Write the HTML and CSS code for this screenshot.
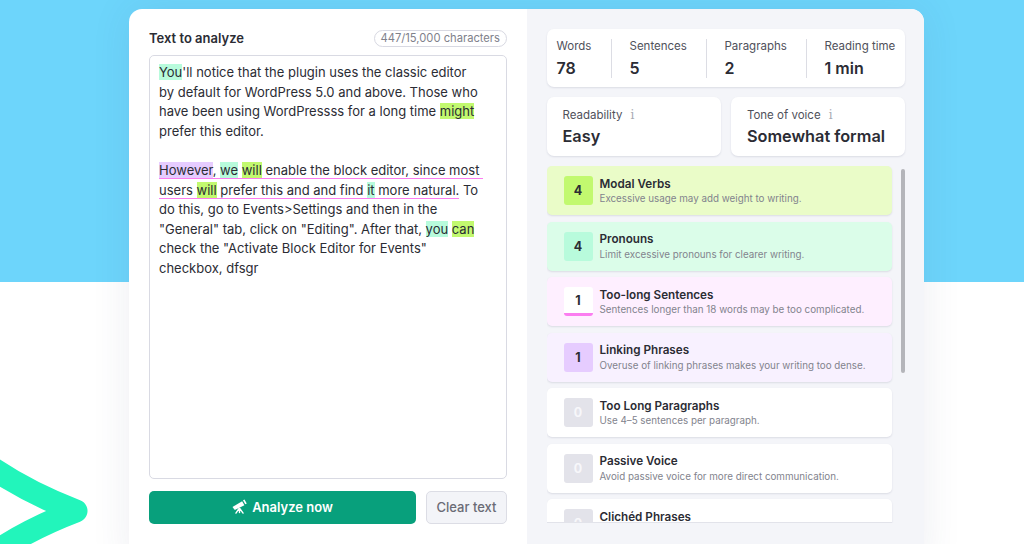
FILE: index.html
```html
<!DOCTYPE html>
<html lang="en">
<head>
<meta charset="utf-8">
<title>Text analyzer</title>
<link rel="stylesheet" href="styles.css">
</head>
<body>
<svg class="logo" width="100" height="100" viewBox="0 0 100 100" aria-hidden="true"><path d="M-14 20Q26 48 76 67Q26 86 -14 114" fill="none" stroke="#22f5bb" stroke-width="23" stroke-linejoin="round"/></svg>
<main class="card">
  <section class="left">
    <div class="head">
      <h2>Text to analyze</h2>
      <span class="count">447/15,000 characters</span>
    </div>
    <div class="editor">
      <p><mark class="mint">You</mark>'ll notice that the plugin uses the classic editor by default for WordPress 5.0 and above. Those who have been using WordPressss for a long time <mark class="lime">might</mark> prefer this editor.</p>
      <p><span class="long"><mark class="lilac">However</mark>, <mark class="mint">we</mark> <mark class="lime">will</mark> enable the block editor, since most users <mark class="lime">will</mark> prefer this and and find <mark class="mint">it</mark> more natural.</span> To do this, go to Events&gt;Settings and then in the "General" tab, click on "Editing". After that, <mark class="mint">you</mark> <mark class="lime">can</mark> check the "Activate Block Editor for Events" checkbox, dfsgr</p>
    </div>
    <div class="actions">
      <button class="primary">
        <svg width="15" height="15" viewBox="0 0 16 16" aria-hidden="true"><g fill="#fff"><path d="M.5 8.4 10.8 2.4l2.4 4.2L3 11.6z"/><path d="M11.7 1.4l1.6-.9 2.4 4.3-1.6.9z"/></g><g fill="none" stroke="#fff" stroke-width="1.5" stroke-linecap="round"><path d="M7.6 10 4.2 15M8.2 10l3.6 5M8 10.500v4"/></g></svg>
        Analyze now
      </button>
      <button class="secondary">Clear text</button>
    </div>
  </section>
  <section class="right">
    <div class="panel stats">
      <div class="stat s1"><span>Words</span><b>78</b></div>
      <div class="stat s2"><span>Sentences</span><b>5</b></div>
      <div class="stat s3"><span>Paragraphs</span><b>2</b></div>
      <div class="stat s4"><span>Reading time</span><b>1 min</b></div>
    </div>
    <div class="duo">
      <div class="panel quality"><span>Readability <i class="info">i</i></span><b>Easy</b></div>
      <div class="panel quality"><span>Tone of voice <i class="info">i</i></span><b>Somewhat formal</b></div>
    </div>
    <div class="list-wrap">
      <ul class="list">
        <li class="row r-lime"><span class="num">4</span><div><h3>Modal Verbs</h3><p>Excessive usage may add weight to writing.</p></div></li>
        <li class="row r-mint"><span class="num">4</span><div><h3>Pronouns</h3><p>Limit excessive pronouns for clearer writing.</p></div></li>
        <li class="row r-pink"><span class="num">1</span><div><h3>Too-long Sentences</h3><p>Sentences longer than 18 words may be too complicated.</p></div></li>
        <li class="row r-lilac"><span class="num">1</span><div><h3>Linking Phrases</h3><p>Overuse of linking phrases makes your writing too dense.</p></div></li>
        <li class="row"><span class="num">0</span><div><h3>Too Long Paragraphs</h3><p>Use 4–5 sentences per paragraph.</p></div></li>
        <li class="row"><span class="num">0</span><div><h3>Passive Voice</h3><p>Avoid passive voice for more direct communication.</p></div></li>
        <li class="row"><span class="num">0</span><div><h3>Clichéd Phrases</h3></div></li>
      </ul>
      <div class="thumb"></div>
    </div>
  </section>
</main>
</body>
</html>
```
FILE: styles.css
```css
* { box-sizing: border-box; }
html, body { margin: 0; height: 544px; overflow: hidden; }
body {
  position: relative;
  background: linear-gradient(#6dd5fb 282px, #fff 282px);
  font-family: Inter, "Liberation Sans", sans-serif;
  color: #2b2c34;
}
.logo { position: absolute; left: 0; top: 444px; }
.card {
  position: relative;
  display: flex;
  width: 795px;
  height: 560px;
  margin: 9px 0 0 129px;
  border-radius: 13px;
  overflow: hidden;
  background: #fff;
  box-shadow: 0 0 40px rgba(60, 70, 110, .09);
}
.left { width: 398px; padding: 19px 20px 0; }
.head { display: flex; justify-content: space-between; align-items: center; height: 20px; margin-bottom: 7px; }
h2 { margin: 0; font-size: 13px; font-weight: 600; line-height: 20px; }
.count {
  font-size: 11.2px; line-height: 15px; color: #80818b;
  border: 1px solid #d8d9e2; border-radius: 9px; padding: 0 6px;
}
.editor {
  height: 424px;
  padding: 7px 23px 7px 9px;
  border: 1px solid #d9dae3;
  border-radius: 5px;
  font-size: 13px;
  line-height: 19.6px;
}
.editor p { margin: 0 0 19.6px; white-space: pre-wrap; }
mark { color: inherit; }
.mint { background: #b8fbdc; }
.lime { background: #c2f96f; }
.lilac { background: #e6ccff; }
.long { border-bottom: 1.5px solid #fb7df0; }
.actions { display: flex; gap: 10px; margin-top: 12px; }
button { height: 33px; padding: 0 0 2px; border-radius: 5px; font: inherit; font-size: 13px; }
.primary {
  display: flex; align-items: center; justify-content: center; gap: 5px;
  width: 267px; border: 0; background: #08a07c; color: #fff; font-weight: 600;
}
.secondary { width: 81px; margin-left: auto; border: 1px solid #dcdde5; background: #f3f4f8; color: #6a6b75; font-weight: 500; }
.right { flex: 1; padding: 20px 20.500px 0 19.500px; background: #f4f5f9; }
.panel { background: #fff; border-radius: 7px; box-shadow: 0 1px 2px rgba(50, 55, 90, .13); }
.stats { display: flex; height: 58px; padding: 10px 10px 9px; }
.stat { display: flex; flex-direction: column; }
.stat + .stat { border-left: 1px solid #dcdde4; padding-left: 18px; }
.s1 { width: 54px; }
.s2 { width: 95px; }
.s3 { width: 100px; }
.s4 { flex: 1; }
.stat span, .quality span { font-size: 11.5px; line-height: 15px; color: #50515b; white-space: nowrap; }
.stat b { margin-top: 4px; font-size: 16px; line-height: 20px; font-weight: 600; }
.duo { display: flex; gap: 10px; margin-top: 10px; }
.quality { display: flex; flex-direction: column; flex: 1; height: 59px; padding: 11px 16px; }
.quality b { margin-top: 3px; font-size: 16.3px; line-height: 20px; font-weight: 600; }
.info { margin-left: 5px; font: 12px "DejaVu Serif", serif; color: #a9aab3; }
.list-wrap { position: relative; height: 357px; margin-top: 10px; overflow: hidden; }
.list-wrap::after {
  content: ""; position: absolute; left: 0; right: 13px; bottom: 0; height: 1px; background: #e2e3ea;
}
.list { display: flex; flex-direction: column; gap: 6.5px; width: 345px; margin: 0; padding: 0; list-style: none; }
.row {
  display: flex; align-items: center; flex: none; gap: 7px;
  height: 49px; padding: 0 17px;
  background: #fff; border-radius: 5px;
  box-shadow: 0 1px 2px rgba(50, 55, 90, .13);
}
.row > div { padding-top: 1.500px; min-height: 31px; }
.num {
  display: flex; align-items: center; justify-content: center; flex: none;
  width: 29px; height: 29px; border-radius: 3px;
  background: #e3e3ea; color: #f7f7fa; font-size: 12.500px; font-weight: 700;
}
.row h3 { margin: 0; font-size: 11.7px; line-height: 14.500px; font-weight: 600; }
.row p { margin: 0; font-size: 9.8px; line-height: 15px; color: #82838d; white-space: nowrap; }
.r-lime { background: #eafcc8; }
.r-lime .num { background: #c2f96f; color: #2b2c34; }
.r-mint { background: #dbfde9; }
.r-mint .num { background: #b8fbdc; color: #2b2c34; }
.r-pink { background: #feefff; }
.r-pink .num { background: #fff; color: #2b2c34; border-bottom: 3px solid #fb7df0; }
.r-lilac { background: #f8f1ff; }
.r-lilac .num { background: #e6ccff; color: #2b2c34; }
.thumb { position: absolute; right: 0; top: 3px; width: 4px; height: 204px; border-radius: 2px; background: #b4b5ba; }
```
